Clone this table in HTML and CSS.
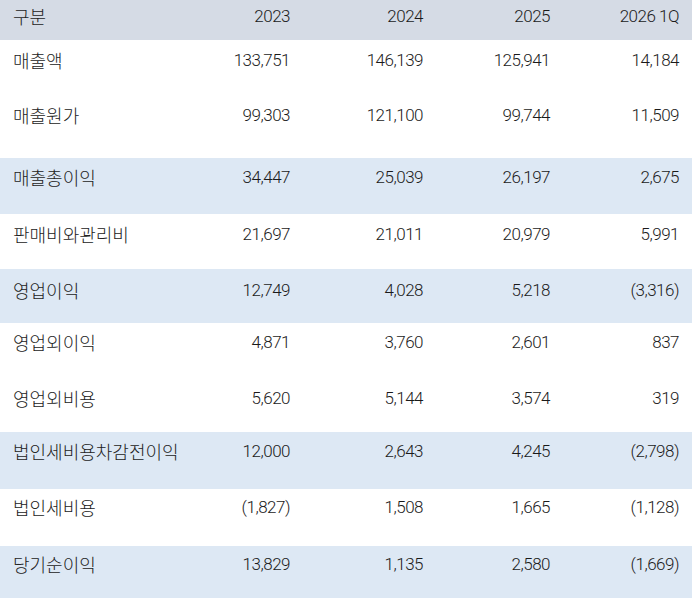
FILE: index.html
```html
<!DOCTYPE html>
<html lang="ko">
<head>
<meta charset="utf-8">
<title>손익계산서</title>
<link rel="stylesheet" href="styles.css">
</head>
<body>
<table class="fin">
  <colgroup>
    <col class="c-label">
    <col class="c-y1">
    <col class="c-y2">
    <col class="c-y3">
    <col class="c-y4">
  </colgroup>
  <thead>
    <tr class="head">
      <th class="lbl">구분</th><th>2023</th><th>2024</th><th>2025</th><th>2026 1Q</th>
    </tr>
  </thead>
  <tbody>
    <tr><td class="lbl">매출액</td><td>133,751</td><td>146,139</td><td>125,941</td><td>14,184</td></tr>
    <tr><td class="lbl">매출원가</td><td>99,303</td><td>121,100</td><td>99,744</td><td>11,509</td></tr>
    <tr class="hl"><td class="lbl">매출총이익</td><td>34,447</td><td>25,039</td><td>26,197</td><td>2,675</td></tr>
    <tr><td class="lbl">판매비와관리비</td><td>21,697</td><td>21,011</td><td>20,979</td><td>5,991</td></tr>
    <tr class="hl"><td class="lbl">영업이익</td><td>12,749</td><td>4,028</td><td>5,218</td><td>(3,316)</td></tr>
    <tr><td class="lbl">영업외이익</td><td>4,871</td><td>3,760</td><td>2,601</td><td>837</td></tr>
    <tr><td class="lbl">영업외비용</td><td>5,620</td><td>5,144</td><td>3,574</td><td>319</td></tr>
    <tr class="hl"><td class="lbl">법인세비용차감전이익</td><td>12,000</td><td>2,643</td><td>4,245</td><td>(2,798)</td></tr>
    <tr><td class="lbl">법인세비용</td><td>(1,827)</td><td>1,508</td><td>1,665</td><td>(1,128)</td></tr>
    <tr class="hl"><td class="lbl">당기순이익</td><td>13,829</td><td>1,135</td><td>2,580</td><td>(1,669)</td></tr>
  </tbody>
</table>
</body>
</html>
```
FILE: styles.css
```css
html, body {
  margin: 0;
  padding: 0;
  background: #ffffff;
}
body {
  font-family: Roboto, "Liberation Sans", "Noto Sans CJK KR", sans-serif;
  font-size: 17px;
  font-weight: 300;
  color: #1a1a1a;
}
.fin {
  width: 692px;
  border-collapse: collapse;
  table-layout: fixed;
}
.c-label { width: 173px; }
.c-y1 { width: 130px; }
.c-y2 { width: 133px; }
.c-y3 { width: 127px; }
.c-y4 { width: 129px; }

.fin th, .fin td {
  padding: 9px 13px 0 0;
  line-height: 20px;
  text-align: right;
  vertical-align: top;
  font-weight: 300;
  letter-spacing: -0.5px;
  white-space: nowrap;
  overflow: visible;
}
.fin .lbl {
  text-align: left;
  padding-left: 13px;
  font-family: "Noto Sans CJK KR", sans-serif;
  font-size: 18px;
  font-weight: 300;
  letter-spacing: 0;
  color: #222222;
}
.head {
  background: #d5dbe5;
  height: 40px;
}
.head th {
  padding-top: 6px;
}
.hl {
  background: #dde8f4;
}
tbody tr:nth-child(1) { height: 58px; }
tbody tr:nth-child(1) td { padding-top: 10px; }
tbody tr:nth-child(2) { height: 60px; }
tbody tr:nth-child(2) td { padding-top: 7px; }
tbody tr:nth-child(3) { height: 56px; }
tbody tr:nth-child(4) { height: 55px; }
tbody tr:nth-child(4) td { padding-top: 10px; }
tbody tr:nth-child(5) { height: 54px; }
tbody tr:nth-child(5) td { padding-top: 11px; }
tbody tr:nth-child(6) { height: 54px; }
tbody tr:nth-child(7) { height: 55px; }
tbody tr:nth-child(7) td { padding-top: 11px; }
tbody tr:nth-child(8) { height: 57px; }
tbody tr:nth-child(9) { height: 57px; }
tbody tr:nth-child(9) td { padding-top: 8px; }
tbody tr:nth-child(10) { height: 56px; }
tbody tr:nth-child(10) td { padding-top: 8px; }
```
